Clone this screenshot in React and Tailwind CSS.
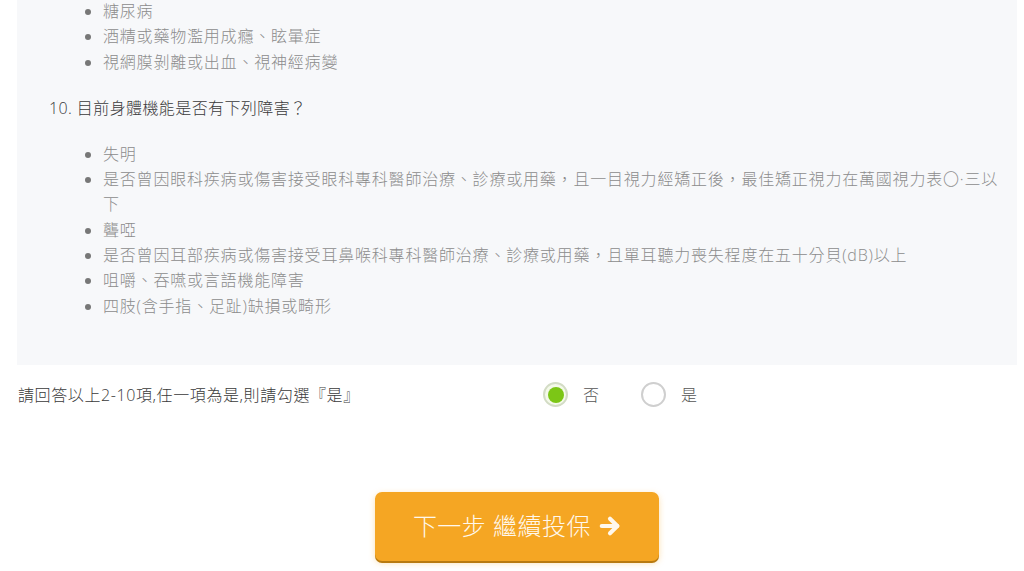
import React from "react";

const font = { fontFamily: '"Open Sans", "Noto Sans CJK TC", sans-serif' };

function Radio({ checked, label }) {
  return (
    <label className="flex items-center">
      {checked ? (
        <span className="flex h-[25px] w-[25px] items-center justify-center rounded-full border-2 border-[#d3dcc5] bg-[#f4f9ea]">
          <span className="h-[16px] w-[16px] rounded-full bg-[#7cc616]" />
        </span>
      ) : (
        <span className="h-[25px] w-[25px] rounded-full border-2 border-[#cfcfcf] bg-white" />
      )}
      <span className="ml-[15px] text-[16px] font-light text-[#555]">{label}</span>
    </label>
  );
}

export default function App() {
  const list1 = ["糖尿病", "酒精或藥物濫用成癮、眩暈症", "視網膜剝離或出血、視神經病變"];
  const list2 = [
    "失明",
    "是否曾因眼科疾病或傷害接受眼科專科醫師治療、診療或用藥，且一目視力經矯正後，最佳矯正視力在萬國視力表〇·三以下",
    "聾啞",
    "是否曾因耳部疾病或傷害接受耳鼻喉科專科醫師治療、診療或用藥，且單耳聽力喪失程度在五十分貝(dB)以上",
    "咀嚼、吞嚥或言語機能障害",
    "四肢(含手指、足趾)缺損或畸形",
  ];
  return (
    <div className="h-[571px] w-[1024px] overflow-hidden bg-white" style={font}>
      <div className="ml-[17px] w-[1000px] bg-[#f7f8fa] pb-[46px] pr-[14px]">
        <ul className="-mt-[1px] list-disc pl-[86px] text-[16px] font-light leading-[25.3px] tracking-[0.8px] text-[#8c8c8c] marker:text-[#777]">
          {list1.map((t) => (
            <li key={t}>{t}</li>
          ))}
        </ul>
        <p className="mt-[21px] pl-[32px] text-[16px] font-light leading-[25px] tracking-[0.4px] text-[#3a3a3a]">
          10. 目前身體機能是否有下列障害？
        </p>
        <ul className="mt-[21px] list-disc pl-[86px] text-[16px] font-light leading-[25.3px] tracking-[0.8px] text-[#8c8c8c] marker:text-[#777]">
          {list2.map((t) => (
            <li key={t}>{t}</li>
          ))}
        </ul>
      </div>
      <div className="mt-[17px] flex h-[26px] items-center pl-[18px]">
        <span className="w-[525px] text-[16px] font-light tracking-[0.6px] text-[#3a3a3a]">
          請回答以上2-10項,任一項為是,則請勾選『是』
        </span>
        <div className="flex items-center gap-[42px]">
          <Radio checked label="否" />
          <Radio label="是" />
        </div>
      </div>
      <div className="mt-[84px] flex justify-center pl-[10px]">
        <button className="flex h-[69px] w-[284px] items-center justify-center gap-[8px] rounded-[7px] bg-[#f5a623] text-[24px] font-light tracking-[0.5px] text-[#fff8ec] shadow-[0_2px_0_#b87a10,0_2px_6px_rgba(245,166,35,0.35)]">
          <span>下一步 繼續投保</span>
          <svg width="22" height="22" viewBox="0 0 24 24" fill="none" stroke="#fff8ec" strokeWidth="4.5" strokeLinecap="round" strokeLinejoin="round">
            <path d="M3 12h17" />
            <path d="M12 4l8 8-8 8" />
          </svg>
        </button>
      </div>
    </div>
  );
}
